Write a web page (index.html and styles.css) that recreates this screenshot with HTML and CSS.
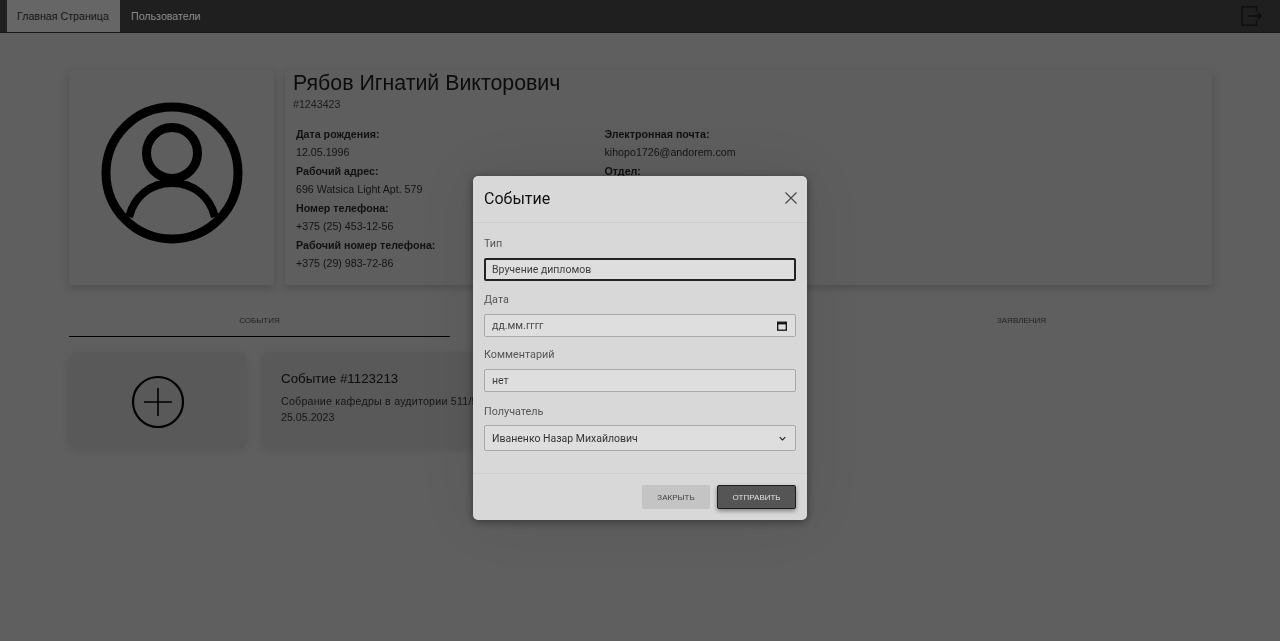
FILE: index.html
```html
<!DOCTYPE html>
<html lang="ru">
<head>
<meta charset="utf-8">
<title>Главная Страница</title>
<link rel="stylesheet" href="styles.css">
</head>
<body>
<header class="navbar">
  <nav class="nav-tabs">
    <a class="nav-tab active">Главная Страница</a>
    <a class="nav-tab">Пользователи</a>
  </nav>
  <svg class="logout" viewBox="0 0 24 22" fill="none" stroke="#0d0d0d" stroke-width="1.5">
    <path d="M17 6V1H1v20h16v-5"/>
    <path d="M7 11h15M18.500 7.500 22 11l-3.500 3.500"/>
  </svg>
</header>
<main class="page">
  <section class="profile">
    <div class="card avatar-card">
      <svg class="avatar" viewBox="0 0 144 144" fill="none" stroke="#000" stroke-width="9">
        <circle cx="72" cy="72" r="66"/>
        <circle cx="72" cy="52" r="25.500"/>
        <path d="M29 116C34 96 50 82 72 82s38 14 43 34" stroke-width="8"/>
      </svg>
    </div>
    <div class="card info-card">
      <h1 class="name">Рябов Игнатий Викторович</h1>
      <div class="uid">#1243423</div>
      <div class="info-columns">
        <dl class="info-col">
          <dt>Дата рождения:</dt><dd>12.05.1996</dd>
          <dt>Рабочий адрес:</dt><dd>696 Watsica Light Apt. 579</dd>
          <dt>Номер телефона:</dt><dd>+375 (25) 453-12-56</dd>
          <dt>Рабочий номер телефона:</dt><dd>+375 (29) 983-72-86</dd>
        </dl>
        <dl class="info-col">
          <dt>Электронная почта:</dt><dd>kihopo1726@andorem.com</dd>
          <dt>Отдел:</dt><dd></dd>
        </dl>
      </div>
    </div>
  </section>
  <div class="tabs">
    <div class="tab active">События</div>
    <div class="tab">Документы</div>
    <div class="tab">Заявления</div>
  </div>
  <section class="events">
    <div class="event add-event">
      <svg class="plus" viewBox="0 0 54 54" fill="none" stroke="#000">
        <circle cx="27" cy="27" r="25" stroke-width="2.200"/>
        <path d="M13 27h28M27 13v28" stroke-width="1.600"/>
      </svg>
    </div>
    <div class="event">
      <div class="event-title">Событие #1123213</div>
      <div class="event-text event-desc">Собрание кафедры в аудитории 511/5</div>
      <div class="event-text">25.05.2023</div>
    </div>
  </section>
</main>
<div class="overlay">
  <div class="modal">
    <div class="modal-head">
      <span class="modal-title">Событие</span>
      <svg class="close" viewBox="0 0 12 12" fill="none" stroke="#444" stroke-width="1.100"><path d="M.5.5l11 11M11.500.5l-11 11"/></svg>
    </div>
    <div class="modal-body">
      <div class="label">Тип</div>
      <div class="field focus">Вручение дипломов</div>
      <div class="label">Дата</div>
      <div class="field date">
        <span>дд.мм.гггг</span>
        <svg class="cal" viewBox="0 0 10 10" fill="none" stroke="#111" stroke-width="1.300"><rect x=".7" y="1.200" width="8.600" height="8"/><path d="M.7 2.500h8.600" stroke-width="1.800"/></svg>
      </div>
      <div class="label">Комментарий</div>
      <div class="field comment">нет</div>
      <div class="label recipient">Получатель</div>
      <div class="field select">
        <span>Иваненко Назар Михайлович</span>
        <svg class="chev" viewBox="0 0 10 6" fill="none" stroke="#222" stroke-width="1.600"><path d="M1 1l4 4 4-4"/></svg>
      </div>
    </div>
    <div class="modal-foot">
      <button class="btn btn-light">Закрыть</button>
      <button class="btn btn-dark">Отправить</button>
    </div>
  </div>
</div>
</body>
</html>
```

FILE: styles.css
```css
* { box-sizing: border-box; }
html, body { margin: 0; height: 100%; }
body {
  background: #5f5f5f;
  font-family: "Liberation Sans", Arial, sans-serif;
  color: #0c0c0c;
  overflow: hidden;
  filter: grayscale(1);
}
.navbar {
  height: 33px;
  background: #1f1f1f;
  border-bottom: 1px solid #171717;
  display: flex;
  align-items: stretch;
  justify-content: space-between;
  padding: 0 17px 0 7px;
}
.nav-tabs { display: flex; gap: 1px; }
.nav-tab {
  padding: 10px 10px 0;
  font-size: 10.670px;
  line-height: 13px;
  color: #8a8a8a;
  white-space: nowrap;
}
.nav-tab.active {
  background: #666;
  color: #161616;
  width: 113px;
}
.logout { width: 22px; height: 20px; margin-top: 6px; }
.page { padding: 37px 68px 0 69px; }
.profile { display: flex; gap: 11px; height: 215px; }
.card {
  background: #5e5e5e;
  box-shadow: 0 3px 10px rgba(0, 0, 0, .18);
  border-radius: 2px;
}
.avatar-card {
  width: 205px;
  display: flex;
  align-items: center;
  justify-content: center;
  padding-bottom: 10px;
}
.avatar { width: 144px; height: 144px; }
.info-card { flex: 1; padding: 0 8px; }
.name {
  margin: 0;
  font-size: 21.330px;
  font-weight: 400;
  line-height: 27px;
}
.uid { font-size: 10.670px; line-height: 13px; margin-top: 1px; color: #1c1c1c; }
.info-columns { display: flex; margin-top: 15px; padding-left: 3px; }
.info-col { margin: 0; width: 308.500px; }
dt { font-size: 10.670px; font-weight: 700; line-height: 17px; color: #111; }
dd { margin: 0 0 2px; font-size: 10.670px; line-height: 18px; color: #141414; }
.tabs { display: flex; margin-top: 20px; }
.tab {
  flex: 1;
  height: 32px;
  text-align: center;
  font-size: 8px;
  line-height: 32px;
  text-transform: uppercase;
  color: #222;
}
.tab.active { border-bottom: 1px solid #000; }
.events { display: flex; gap: 16px; margin-top: 15px; }
.event {
  width: 400px;
  height: 95px;
  background: #595959;
  border-radius: 8px;
  box-shadow: 0 2px 8px rgba(0, 0, 0, .12);
  padding: 19px;
}
.add-event {
  width: 177px;
  padding: 4px 0 0;
  display: flex;
  align-items: center;
  justify-content: center;
}
.plus { width: 54px; height: 54px; }
.event-title { font-size: 13.330px; line-height: 16px; margin-bottom: 6px; }
.event-text { font-size: 10.670px; line-height: 16px; color: #161616; white-space: nowrap; }
.event-desc { letter-spacing: .22px; }
.overlay {
  position: fixed;
  inset: 0;
  display: flex;
  justify-content: center;
  align-items: flex-start;
  padding-top: 176px;
}
.modal {
  width: 334px;
  height: 344px;
  background: #d8d8d8;
  border-radius: 5px;
  box-shadow: 0 2px 8px rgba(0, 0, 0, .4), 0 0 60px rgba(0, 0, 0, .08);
  font-family: Roboto, "Liberation Sans", sans-serif;
  display: flex;
  flex-direction: column;
}
.modal-head {
  height: 47px;
  flex: none;
  border-bottom: 1px solid #cdcdcd;
  display: flex;
  align-items: center;
  justify-content: space-between;
  padding: 0 10px 2px 11px;
}
.modal-title { font-size: 16px; color: #111; }
.close { width: 12px; height: 12px; }
.modal-body { flex: 1; padding: 14px 11px 0; }
.label { font-size: 10.800px; line-height: 13px; color: #555; margin-bottom: 8px; }
.label.recipient { margin-bottom: 7px; }
.field {
  height: 23px;
  border: 1px solid #a9a9a9;
  border-radius: 2px;
  background: #dedede;
  padding: 0 7px;
  font-size: 10.500px;
  line-height: 21px;
  color: #3f3f3f;
  margin-bottom: 11px;
  display: flex;
  align-items: center;
  justify-content: space-between;
}
.field.focus { border: 2px solid #222; padding: 0 6px; margin-bottom: 12px; }
.field.date { color: #4a4a4a; }
.field.comment { margin-bottom: 13px; }
.field.select { height: 26px; color: #333; }
.cal { width: 10px; height: 10px; margin-right: 1px; }
.chev { width: 7px; height: 5px; margin-right: 2px; }
.modal-foot {
  height: 47px;
  flex: none;
  border-top: 1px solid #cfcfcf;
  display: flex;
  justify-content: flex-end;
  gap: 7px;
  padding: 11px 11px 0 0;
}
.btn {
  height: 24px;
  border: 0;
  border-radius: 2px;
  padding: 0;
  font-family: "Liberation Sans", Arial, sans-serif;
  font-size: 8px;
  text-transform: uppercase;
}
.btn-light { width: 68px; background: #c4c4c4; color: #444; }
.btn-dark {
  width: 79px;
  background: #555;
  color: #e0e0e0;
  border: 1px solid #1c1c1c;
  box-shadow: 0 2px 4px rgba(0, 0, 0, .4);
}
```
